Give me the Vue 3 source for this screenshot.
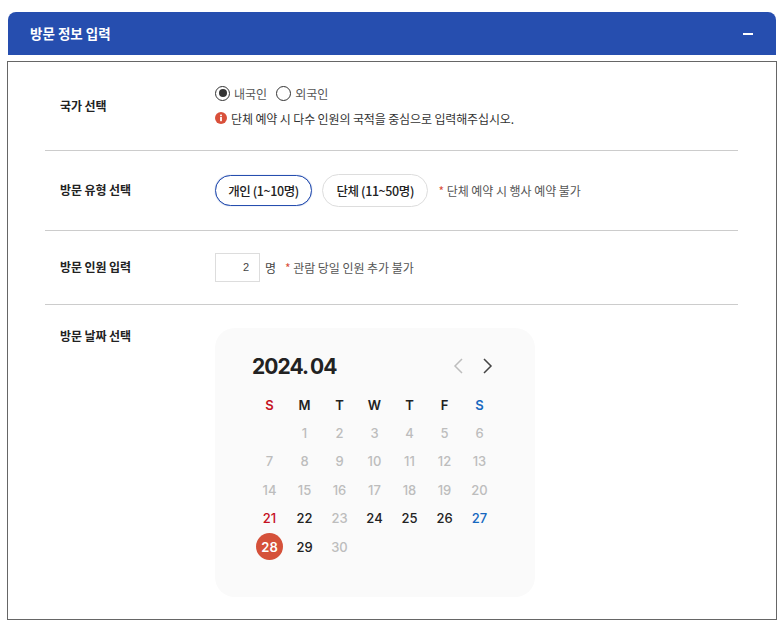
<template>
  <div class="page">
    <div class="panel-head">
      <span class="panel-title">방문 정보 입력</span>
      <span class="collapse-bar"></span>
    </div>
    <div class="panel-body">
      <div class="row row-country">
        <div class="label label-country">국가 선택</div>
        <div class="field">
          <div class="radios">
            <span class="radio checked"></span><span class="radio-text">내국인</span>
            <span class="radio second"></span><span class="radio-text">외국인</span>
          </div>
          <div class="notice">
            <svg class="notice-icon" width="12" height="12" viewBox="0 0 12 12">
              <circle cx="6" cy="6" r="6" fill="#d9503a" />
              <rect x="5.1" y="5" width="1.8" height="4.2" fill="#fff" />
              <rect x="5.1" y="2.6" width="1.8" height="1.6" fill="#fff" />
            </svg>
            <span>단체 예약 시 다수 인원의 국적을 중심으로 입력해주십시오.</span>
          </div>
        </div>
      </div>

      <div class="row row-type">
        <div class="label">방문 유형 선택</div>
        <div class="field inline">
          <button class="pill active">개인 (1~10명)</button>
          <button class="pill">단체 (11~50명)</button>
          <span class="hint"><i>*</i> 단체 예약 시 행사 예약 불가</span>
        </div>
      </div>

      <div class="row row-count">
        <div class="label">방문 인원 입력</div>
        <div class="field inline">
          <input class="count" type="text" value="2" />
          <span class="unit">명</span>
          <span class="hint"><i>*</i> 관람 당일 인원 추가 불가</span>
        </div>
      </div>

      <div class="row row-date">
        <div class="label">방문 날짜 선택</div>
        <div class="calendar">
          <div class="cal-head">
            <span class="cal-title">2024. 04</span>
            <div class="cal-nav">
              <svg width="12" height="16" viewBox="0 0 12 16" fill="none" stroke="#bdbdbd" stroke-width="1.5">
                <path d="M10 1 L3 8 L10 15" />
              </svg>
              <svg width="12" height="16" viewBox="0 0 12 16" fill="none" stroke="#444" stroke-width="1.5">
                <path d="M2 1 L9 8 L2 15" />
              </svg>
            </div>
          </div>
          <div class="cal-grid">
            <span v-for="(w, i) in weekdays" :key="'w' + i" class="cell week" :class="weekClass(i)">{{ w }}</span>
            <span v-for="n in 1" :key="'b' + n" class="cell"></span>
            <span v-for="d in 30" :key="d" class="cell day" :class="dayClass(d)">
              <b v-if="d === 28" class="today">{{ d }}</b>
              <template v-else>{{ d }}</template>
            </span>
          </div>
        </div>
      </div>
    </div>
  </div>
</template>

<script setup>
const weekdays = ["S", "M", "T", "W", "T", "F", "S"];

function weekClass(i) {
  if (i === 0) return "sun";
  if (i === 6) return "sat";
  return "";
}

function dayClass(d) {
  if (d === 21) return "sun";
  if (d === 27) return "sat";
  if (d === 22 || d === 24 || d === 25 || d === 26 || d === 29) return "open";
  return "";
}
</script>

<style>
html,
body {
  margin: 0;
  background: #fff;
}
</style>

<style scoped>
.page {
  width: 782px;
  height: 624px;
  box-sizing: border-box;
  padding: 12px 5px 0 7px;
  overflow: hidden;
  font-family: "Noto Sans CJK KR", "Noto Sans", sans-serif;
  color: #222;
}

.panel-head {
  height: 43px;
  margin: 0 1px 6px 1px;
  background: #264eaf;
  border-radius: 8px 8px 0 0;
  display: flex;
  align-items: center;
  justify-content: space-between;
  padding: 0 23px 0 22px;
}

.panel-title {
  color: #fff;
  font-size: 13.5px;
  font-weight: 700;
  position: relative;
  top: -1px;
}

.collapse-bar {
  width: 10px;
  height: 2px;
  background: #fff;
}

.panel-body {
  height: 559px;
  box-sizing: border-box;
  border: 1px solid #666;
  padding: 0 38px 0 37px;
}

.row {
  display: flex;
  padding-left: 15px;
  border-bottom: 1px solid #ccc;
  box-sizing: border-box;
}

.row-country {
  height: 89px;
  padding-top: 22px;
}

.row-type {
  height: 80px;
  align-items: center;
  padding-bottom: 1px;
}

.row-count {
  height: 74px;
  align-items: center;
  padding-bottom: 1px;
}

.row-date {
  border-bottom: none;
  padding-top: 22px;
}

.label {
  width: 155px;
  flex: none;
  font-size: 12px;
  font-weight: 700;
  letter-spacing: -0.1px;
  color: #222;
  line-height: 18px;
}

.label-country {
  padding-top: 13px;
}

.field.inline {
  display: flex;
  align-items: center;
}

.radios {
  display: flex;
  align-items: center;
  height: 18px;
  font-size: 12px;
  color: #555;
}

.radio {
  width: 13px;
  height: 13px;
  border: 1px solid #333;
  border-radius: 50%;
  background: #fff;
  flex: none;
  position: relative;
}

.radio.checked::after {
  content: "";
  position: absolute;
  left: 2.5px;
  top: 2.5px;
  width: 8px;
  height: 8px;
  border-radius: 50%;
  background: #333;
}

.radio.second {
  margin-left: 9px;
}

.radio-text {
  margin-left: 4px;
}

.notice {
  display: flex;
  align-items: center;
  margin-top: 7px;
  height: 18px;
  font-size: 12px;
  letter-spacing: -0.13px;
  color: #333;
}

.notice-icon {
  margin: 0 4px 0 0;
  flex: none;
}

.pill {
  height: 33px;
  box-sizing: border-box;
  border: 1px solid #ddd;
  border-radius: 17px;
  background: #fff;
  font-family: inherit;
  font-size: 12.5px;
  font-weight: 500;
  letter-spacing: -0.4px;
  color: #222;
  padding: 0 13.5px;
  margin-right: 10px;
}

.pill.active {
  border-color: #264eaf;
  box-shadow: 0 0 1px rgba(38, 78, 175, 0.6);
  width: 97px;
  height: 31px;
  padding: 0;
}

.hint {
  font-size: 12px;
  letter-spacing: -0.05px;
  color: #555;
}

.hint i {
  font-style: normal;
  color: #d9503a;
}

.count {
  width: 45px;
  height: 29px;
  box-sizing: border-box;
  border: 1px solid #ddd;
  padding: 0 10px 0 0;
  text-align: right;
  font-family: "Liberation Sans", sans-serif;
  font-size: 11px;
  color: #444;
  outline: none;
}

.unit {
  font-size: 12px;
  color: #444;
  margin: 0 9px 0 5px;
}

.calendar {
  width: 320px;
  height: 269px;
  box-sizing: border-box;
  background: #fafafa;
  border-radius: 20px;
  padding: 23px 38px 0 37px;
  margin-top: 1px;
  font-family: Inter, "Liberation Sans", sans-serif;
}

.cal-head {
  display: flex;
  align-items: center;
  justify-content: space-between;
  height: 30px;
  margin-bottom: 9.5px;
}

.cal-title {
  font-size: 21px;
  font-weight: 700;
  letter-spacing: -0.95px;
  word-spacing: -1.5px;
  color: #222;
}

.cal-nav {
  display: flex;
  gap: 18px;
  margin-right: 3px;
}

.cal-nav svg {
  display: block;
}

.cal-grid {
  display: grid;
  grid-template-columns: repeat(7, 35px);
  grid-auto-rows: 28.4px;
}

.cell {
  display: flex;
  align-items: center;
  justify-content: center;
  font-size: 13px;
}

.week {
  font-weight: 600;
  color: #222;
}

.day {
  font-weight: 500;
  color: #bdbdbd;
}

.day.open {
  color: #222;
}

.sun {
  color: #c5101f;
}

.sat {
  color: #1668c0;
}

.today {
  width: 27px;
  height: 27px;
  border-radius: 50%;
  background: #d5513a;
  color: #fff;
  font-weight: 600;
  display: flex;
  align-items: center;
  justify-content: center;
}
</style>
